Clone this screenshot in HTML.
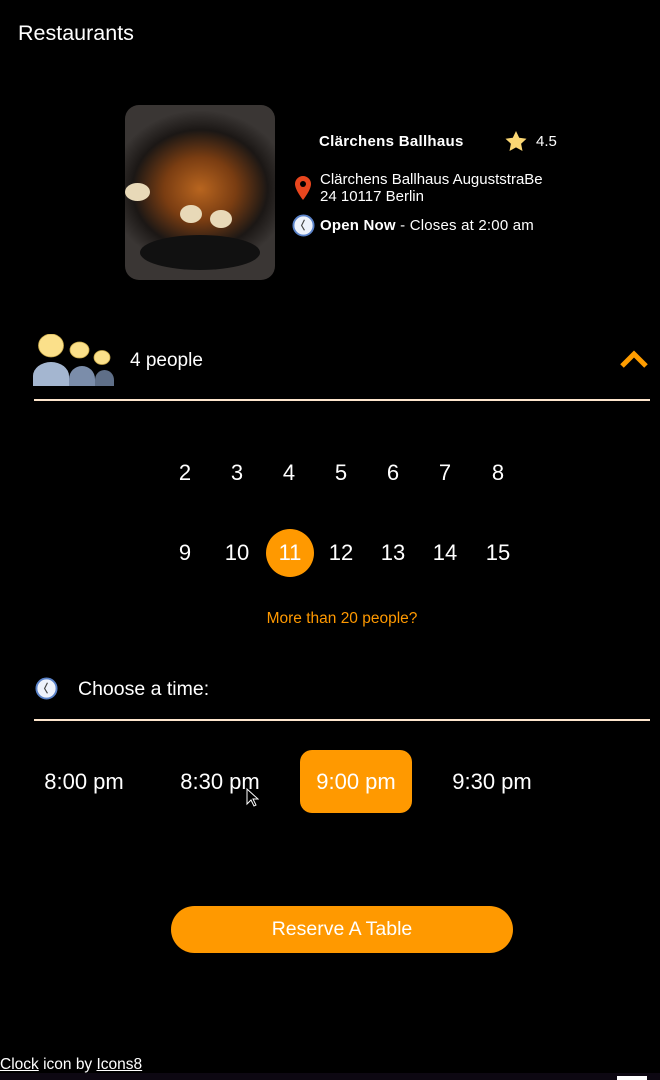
<!DOCTYPE html>
<html><head><meta charset="utf-8"><style>
*{margin:0;padding:0;box-sizing:border-box}
body{width:660px;height:1080px;background:#000;color:#fff;font-family:"Liberation Sans",sans-serif;position:relative;overflow:hidden}
.a{position:absolute}
.n{position:absolute;width:48px;height:48px;line-height:48px;text-align:center;font-size:22px;margin-left:-24px;margin-top:-24px}
.t{position:absolute;width:112px;height:63px;line-height:63px;text-align:center;font-size:22px;margin-left:-56px;top:750px}
.line{position:absolute;left:34px;width:616px;height:2px;background:#fde5cc}
</style></head><body>
<div class="a" style="left:18px;top:21px;font-size:21.5px">Restaurants</div>
<div class="a" style="left:125px;top:105px;width:150px;height:175px;border-radius:14px;overflow:hidden;background:radial-gradient(ellipse 60% 45% at 50% 48%,#b8651f 0%,#7a3d12 40%,#1b1715 75%,#3a3634 100%)">
 <div class="a" style="left:15px;top:130px;width:120px;height:35px;border-radius:50%;background:#111"></div>
 <div class="a" style="left:55px;top:100px;width:22px;height:18px;border-radius:50%;background:#e8d9b8"></div>
 <div class="a" style="left:85px;top:105px;width:22px;height:18px;border-radius:50%;background:#e8d9b8"></div>
 <div class="a" style="left:0px;top:78px;width:25px;height:18px;border-radius:50%;background:#e8d9b8"></div>
</div>
<div class="a" style="left:319px;top:133px;font-size:15px;font-weight:bold;letter-spacing:0.3px">Clärchens Ballhaus</div>
<svg class="a" style="left:504px;top:130px" width="24" height="22" viewBox="0 0 24 22"><path d="M12 1l3.2 6.8 7.3.9-5.4 5 1.4 7.3L12 17.4 5.5 21l1.4-7.3-5.4-5 7.3-.9z" fill="#fbd774"/></svg>
<div class="a" style="left:536px;top:133px;font-size:15px">4.5</div>
<svg class="a" style="left:293px;top:175px" width="20" height="26" viewBox="0 0 20 26"><path d="M10 1a8 8 0 0 0-8 8c0 6 8 16 8 16s8-10 8-16a8 8 0 0 0-8-8z" fill="#e8461e"/><circle cx="10" cy="9" r="3" fill="#000"/></svg>
<div class="a" style="left:320px;top:171px;font-size:15px;line-height:17px">Clärchens Ballhaus AuguststraBe<br>24 10117 Berlin</div>
<svg class="a" style="left:292px;top:214px" width="23" height="23" viewBox="0 0 24 24"><circle cx="12" cy="12" r="10.5" fill="#eef2fb" stroke="#5a82c8" stroke-width="2"/><path d="M13 6l-3 6 3 5" stroke="#444" stroke-width="1.2" fill="none"/></svg>
<div class="a" style="left:320px;top:217px;font-size:15px;letter-spacing:0.2px"><b>Open Now</b> - Closes at 2:00 am</div>

<svg class="a" style="left:33px;top:334px" width="82" height="52" viewBox="0 0 82 52"><ellipse cx="18" cy="11.5" rx="12.5" ry="11.5" fill="#fbe08a" stroke="#c9a94a" stroke-width="0.8"/><ellipse cx="46.5" cy="16" rx="9.5" ry="8" fill="#fbe08a" stroke="#c9a94a" stroke-width="0.8"/><ellipse cx="69" cy="23.5" rx="8" ry="7" fill="#fbe08a" stroke="#c9a94a" stroke-width="0.8"/><path d="M62 52v-6a9.5 10 0 0 1 19 0v6z" fill="#5f6f88"/><path d="M36 52v-7a13 13 0 0 1 26 0v7z" fill="#7b8daa"/><path d="M0 52v-10a18 14 0 0 1 36 0v10z" fill="#a4b6d0"/></svg>
<div class="a" style="left:130px;top:350px;font-size:19px">4 people</div>
<svg class="a" style="left:620px;top:348px" width="28" height="20" viewBox="0 0 28 20"><path d="M2 18L14 6l12 12" stroke="#ff9d00" stroke-width="5" fill="none"/></svg>
<div class="line" style="top:399px"></div>

<div class="n" style="left:185px;top:473px">2</div><div class="n" style="left:237px;top:473px">3</div><div class="n" style="left:289px;top:473px">4</div><div class="n" style="left:341px;top:473px">5</div><div class="n" style="left:393px;top:473px">6</div><div class="n" style="left:445px;top:473px">7</div><div class="n" style="left:498px;top:473px">8</div>
<div class="n" style="left:185px;top:553px">9</div><div class="n" style="left:237px;top:553px">10</div><div class="n" style="left:290px;top:553px;background:#ff9900;border-radius:50%">11</div><div class="n" style="left:341px;top:553px">12</div><div class="n" style="left:393px;top:553px">13</div><div class="n" style="left:445px;top:553px">14</div><div class="n" style="left:498px;top:553px">15</div>
<div class="a" style="left:0;width:684px;text-align:center;top:610px;font-size:15.5px;color:#ff9900">More than 20 people?</div>

<svg class="a" style="left:35px;top:677px" width="23" height="23" viewBox="0 0 24 24"><circle cx="12" cy="12" r="10.5" fill="#eef2fb" stroke="#5a82c8" stroke-width="2"/><path d="M13 6l-3 6 3 5" stroke="#444" stroke-width="1.2" fill="none"/></svg>
<div class="a" style="left:78px;top:678px;font-size:19.5px">Choose a time:</div>
<div class="line" style="top:719px"></div>

<div class="t" style="left:84px">8:00 pm</div>
<div class="t" style="left:220px">8:30 pm</div>
<div class="t" style="left:356px;background:#ff9900;border-radius:12px">9:00 pm</div>
<div class="t" style="left:492px">9:30 pm</div>
<svg class="a" style="left:246px;top:788px" width="13" height="20" viewBox="0 0 13 20"><path d="M1 1v15l4-4 3 6 2-1-3-6h5z" fill="#000" stroke="#fff" stroke-width="1"/></svg>

<div class="a" style="left:171px;top:906px;width:342px;height:47px;border-radius:24px;background:#ff9900;text-align:center;line-height:47px;font-size:19.5px">Reserve A Table</div>

<div class="a" style="left:0;top:1056px;font-size:15.5px"><u>Clock</u> icon by <u>Icons8</u></div>
<div class="a" style="left:0;top:1073px;width:660px;height:7px;background:#0d0812"></div>
<div class="a" style="left:617px;top:1076px;width:30px;height:4px;background:#fff"></div>
</body></html>
